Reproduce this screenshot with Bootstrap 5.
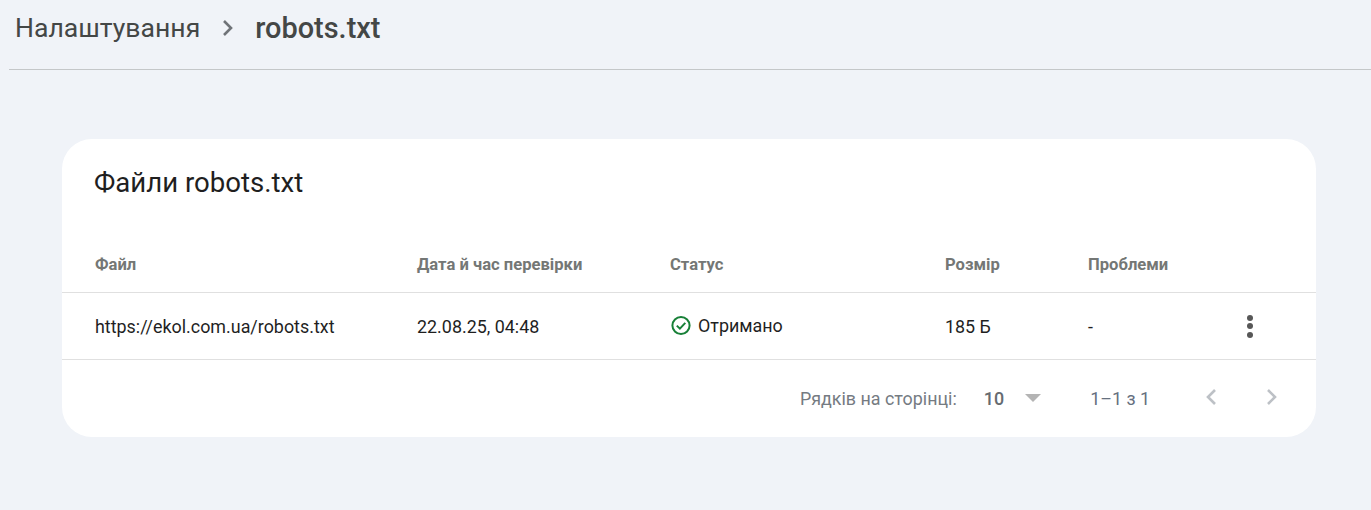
<!DOCTYPE html>
<html lang="uk">
<head>
<meta charset="utf-8">
<title>robots.txt</title>
<link rel="stylesheet" href="https://cdn.jsdelivr.net/npm/bootstrap@5.3.0/dist/css/bootstrap.min.css">
<style>
html,body{height:100%}
body{background:#f0f3f8;font-family:Roboto,"Liberation Sans",sans-serif;color:#1f1f1f;overflow:hidden}
.crumbs{margin-left:9px;height:70px;border-bottom:1px solid #c4c7c9;padding:0 0 14px 6px;color:#444746;font-size:26.6px;line-height:56px}
.crumbs .cur{font-weight:500;font-size:28.9px;margin-left:20px}
.crumbs svg{margin-left:21px}
.panel{margin:69px 55px 0 62px;height:298px;background:#fff;border-radius:30px;overflow:hidden}
.panel-title{font-size:27.6px;line-height:32px;font-weight:400;margin:0;padding:28px 32px 0;height:91px;color:#1f1f1f}
.tbl{table-layout:fixed;width:100%;margin:0;font-size:17.9px}
.tbl th,.tbl td{padding:0 0 0 33px;vertical-align:middle;border-color:#e0e0e0;box-shadow:none}
.tbl th{font-size:16.6px;font-weight:700;color:#747775;height:62px;padding-top:18px;padding-bottom:8px}
.tbl td{height:67px;color:#1f1f1f;padding-top:3px}
.tbl .c2,.tbl .c3,.tbl .c4,.tbl .c5{padding-left:0}
.c1{width:355px}.c2{width:253px}.c3{width:275px}.c4{width:143px}.c5{width:145px}
.status{gap:6px;margin-top:-2px}
.dots{gap:2.5px;margin-left:-19px;margin-top:-2px;width:7px}
.dots i{display:block;width:6px;height:6px;border-radius:50%;background:#575757}
.pager{height:77px;padding:3px 38px 0 0;font-size:17.9px;color:#757b82;justify-content:flex-end}
.pager .num{color:#666b70;margin-left:27px;font-weight:500}
.pager .caret{width:0;height:0;border-left:8px solid transparent;border-right:8px solid transparent;border-top:8px solid #b4b4b4;margin-left:21px;margin-top:-3px}
.pager .range{color:#66707f;margin-left:49px;margin-right:55px}
.pager .nxt{margin-left:49px}
.pager svg{margin-top:-5px}
</style>
</head>
<body>
<div class="crumbs d-flex align-items-start">
<span>Налаштування</span>
<svg width="14" height="56" viewBox="0 0 14 56" aria-hidden="true"><path d="M3 21 L10 28 L3 35" fill="none" stroke="#6f7378" stroke-width="2.6"/></svg>
<span class="cur">robots.txt</span>
</div>
<div class="panel">
<h2 class="panel-title">Файли robots.txt</h2>
<table class="table tbl">
<thead><tr>
<th class="c1">Файл</th><th class="c2">Дата й час перевірки</th><th class="c3">Статус</th><th class="c4">Розмір</th><th class="c5">Проблеми</th><th></th>
</tr></thead>
<tbody><tr>
<td class="c1">https://ekol.com.ua/robots.txt</td>
<td class="c2">22.08.25, 04:48</td>
<td class="c3"><span class="d-flex align-items-center status">
<svg width="22" height="21" viewBox="0 0 22 21" aria-hidden="true"><circle cx="11" cy="10.5" r="8.6" fill="none" stroke="#188038" stroke-width="2"/><path d="M6.8 10.6 L9.9 13.6 L15.3 7.9" fill="none" stroke="#188038" stroke-width="2"/></svg>
<span>Отримано</span></span></td>
<td class="c4">185 Б</td>
<td class="c5">-</td>
<td><span class="d-flex flex-column dots"><i></i><i></i><i></i></span></td>
</tr></tbody>
</table>
<div class="pager d-flex align-items-center">
<span>Рядків на сторінці:</span>
<span class="num">10</span>
<span class="caret"></span>
<span class="range">1–1 з 1</span>
<svg width="12" height="18" viewBox="0 0 12 18" aria-hidden="true"><path d="M10 2 L3 9 L10 16" fill="none" stroke="#bdc1c6" stroke-width="2.6"/></svg>
<svg class="nxt" width="12" height="18" viewBox="0 0 12 18" aria-hidden="true"><path d="M2 2 L9 9 L2 16" fill="none" stroke="#bdc1c6" stroke-width="2.6"/></svg>
</div>
</div>
<script src="https://cdn.jsdelivr.net/npm/bootstrap@5.3.0/dist/js/bootstrap.bundle.min.js"></script>
</body>
</html>
